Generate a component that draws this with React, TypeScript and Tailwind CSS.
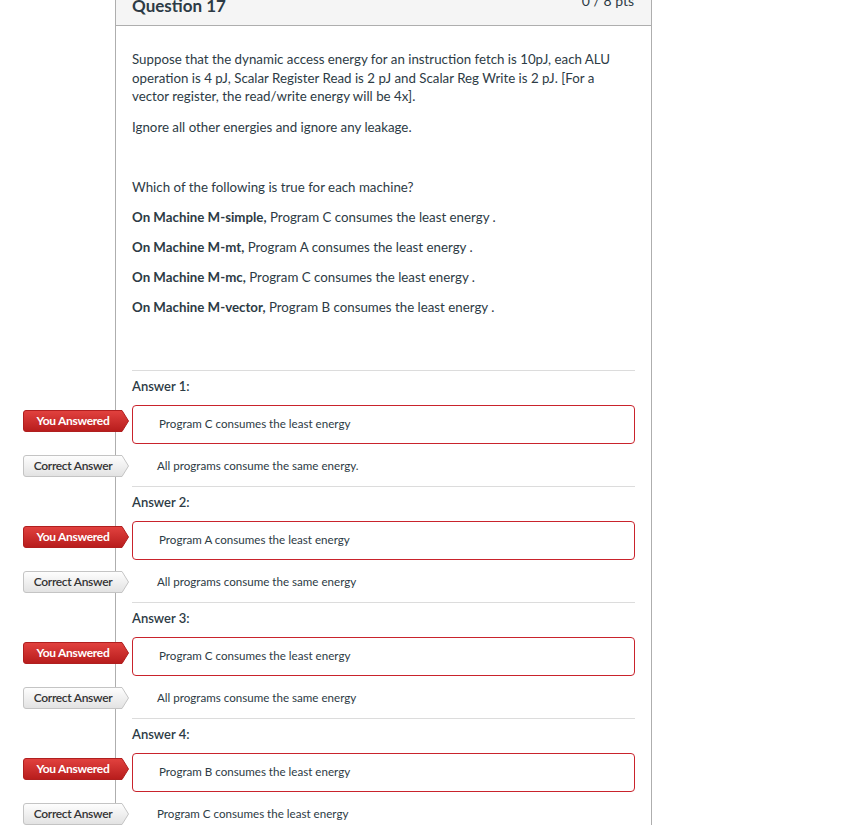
import React from "react";

type Answer = { label: string; given: string; correct: string };

const ANSWERS: Answer[] = [
  { label: "Answer 1:", given: "Program C consumes the least energy", correct: "All programs consume the same energy." },
  { label: "Answer 2:", given: "Program A consumes the least energy", correct: "All programs consume the same energy" },
  { label: "Answer 3:", given: "Program C consumes the least energy", correct: "All programs consume the same energy" },
  { label: "Answer 4:", given: "Program B consumes the least energy", correct: "Program C consumes the least energy" },
];

const CHOICES = [
  { machine: "On Machine M-simple,", rest: "Program C consumes the least energy ." },
  { machine: "On Machine M-mt,", rest: "Program A consumes the least energy ." },
  { machine: "On Machine M-mc,", rest: "Program C consumes the least energy ." },
  { machine: "On Machine M-vector,", rest: "Program B consumes the least energy ." },
];

function Badge({ kind }: { kind: "you" | "correct" }) {
  const you = kind === "you";
  const id = you ? "gYou" : "gCorrect";
  return (
    <div className="absolute left-[-109px] h-[22px] w-[106px]">
      <svg className="absolute inset-0" width="106" height="22" viewBox="0 0 106 22">
        <defs>
          <linearGradient id={id} x1="0" y1="0" x2="0" y2="1">
            {you ? (
              <>
                <stop offset="0" stopColor="#e2423f" />
                <stop offset="1" stopColor="#b71c1c" />
              </>
            ) : (
              <>
                <stop offset="0" stopColor="#fefefe" />
                <stop offset="1" stopColor="#e2e2e2" />
              </>
            )}
          </linearGradient>
        </defs>
        <path
          d="M0.5 3 Q0.5 0.5 3 0.5 H99 L105.5 11 L99 21.5 H3 Q0.5 21.5 0.5 19 Z"
          fill={`url(#${id})`}
          stroke={you ? "#b01f1f" : "#c4c4c4"}
          strokeWidth="1"
        />
      </svg>
      <span
        className={`relative flex h-full w-[100px] items-center justify-center text-[12px] tracking-[-0.3px] ${
          you ? "font-bold text-white" : "font-semibold text-[#333]"
        }`}
      >
        {you ? "You Answered" : "Correct Answer"}
      </span>
    </div>
  );
}

function AnswerBlock({ a }: { a: Answer }) {
  return (
    <div className="border-t border-[#dcdcdc]">
      <div className="h-[34px] pt-[6px] text-[13px] font-semibold leading-[19px]">{a.label}</div>
      <div className="relative">
        <div className="absolute top-[5px]">
          <Badge kind="you" />
        </div>
        <div className="flex h-[39px] items-center rounded-[4px] border border-[#c9232c] pl-[26px] text-[11.6px]">
          {a.given}
        </div>
      </div>
      <div className="relative mt-[11px] mb-[9px] flex h-[22px] items-center">
        <div className="absolute top-0">
          <Badge kind="correct" />
        </div>
        <span className="pl-[25px] text-[11.6px]">{a.correct}</span>
      </div>
    </div>
  );
}

export default function App() {
  return (
    <div className="w-[858px] bg-white text-[#2d3b45]" style={{ fontFamily: "Lato, 'Open Sans', sans-serif" }}>
      <div className="border-b border-[#d5d5d5]">
        <div className="ml-[115px] w-[537px] border-x border-[#aeaeae]">
          {/* Header */}
          <div className="flex h-[26px] justify-between overflow-hidden border-b border-[#aeaeae] bg-[#f5f5f5] pl-[16px] pr-[17px]">
            <span className="mt-[-5px] text-[17px] font-bold leading-[22px]">Question 17</span>
            <span className="mt-[-8px] text-[14px] leading-[18px]">0 / 8 pts</span>
          </div>

          {/* Body */}
          <div className="px-[16px] pt-[24px]">
            <p className="pr-[6px] text-[13.3px] leading-[18.7px]">
              Suppose that the dynamic access energy for an instruction fetch is 10pJ, each ALU operation is 4 pJ,
              Scalar Register Read is 2 pJ and Scalar Reg Write is 2 pJ. [For a vector register, the read/write
              energy will be 4x].
            </p>
            <p className="mt-[12px] text-[13.3px] leading-[18.7px]">Ignore all other energies and ignore any leakage.</p>
            <p className="mt-[41px] text-[13.3px] leading-[18.7px]">Which of the following is true for each machine?</p>
            {CHOICES.map((c) => (
              <p key={c.machine} className="mt-[11.3px] text-[13.3px] leading-[18.7px]">
                <strong className="font-bold">{c.machine}</strong> {c.rest}
              </p>
            ))}

            <div className="mt-[53px]">
              {ANSWERS.map((a) => (
                <AnswerBlock key={a.label} a={a} />
              ))}
            </div>
          </div>
        </div>
      </div>
      <div className="h-[4px]" />
    </div>
  );
}
